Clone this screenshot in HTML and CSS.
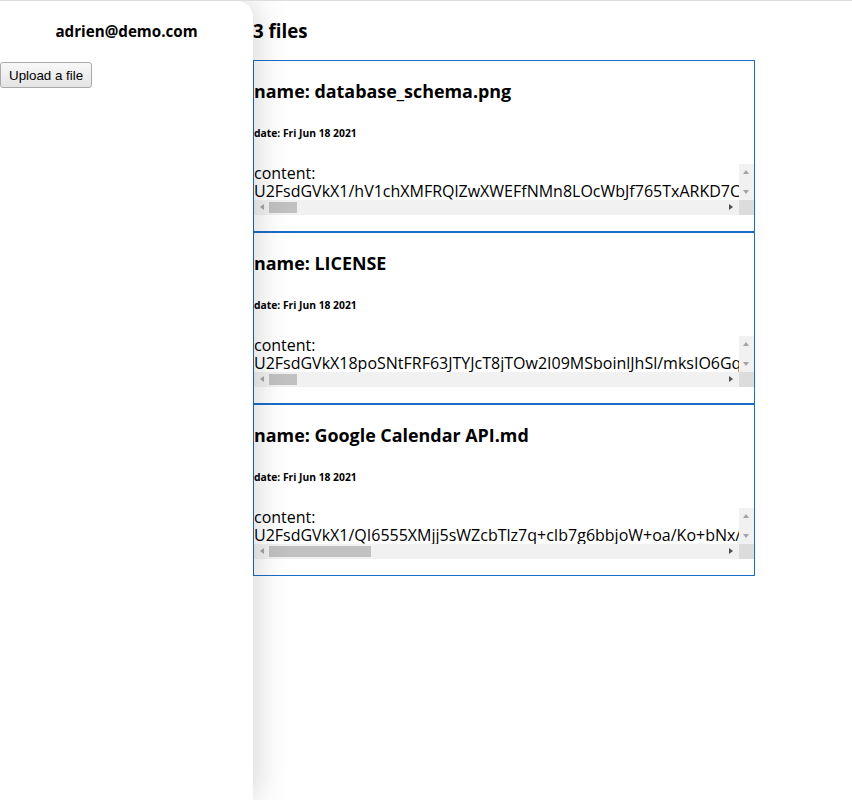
FILE: index.html
```html
<!DOCTYPE html>
<html lang="en">
<head>
<meta charset="utf-8">
<title>Files</title>
<link rel="stylesheet" href="styles.css">
</head>
<body>
<div class="app">
  <aside class="sidebar">
    <h4 class="user">adrien@demo.com</h4>
    <button class="upload" type="button">Upload a file</button>
  </aside>
  <main class="main">
    <h3 class="count">3 files</h3>
    <div class="file">
      <h3 class="name">name: database_schema.png</h3>
      <h6 class="date">date: Fri Jun 18 2021</h6>
      <div class="content">
        <p class="content-text">content: U2FsdGVkX1/hV1chXMFRQlZwXWEFfNMn8LOcWbJf765TxARKD7Cz3qLm9Vb+Hk2sPe0YtR4uWj8nGa6xIo1Dc5Fv7Nl/Ey3Zr9Kq0Ms2Bt8Ph4Jw6Ud1Xg+Ca5Vi7Oe3Ly9Tn0Rb2Qk4Sf6Mh8Wo1Az3Gp5Ix7Ej9Hc0Nu2Yd4Kv6Lb8Fm1Pt3Rs5Zw7Dq9Aj0Ik2Co4Ug6Ey8Tx1Ma3Vr5Ob7Wn9Hl0Gf2Js4Bz6Dk8Pu1Lc3Qy5Nw7Xe9Fi0Ra2St4Mv6Yo8Kh1Tb3Ed5Cj7Ul9Ag0Wp2In4Vs6Hx8Oz1Gm3Lq5Ft7Rk9Dy0Bu2Ne4Pa6Jc8Xw1Si3Kl5Mg7Ov9Th0Qf2Zb4Ar6Yn8Ej1Up3Cx5Is7Dm9Wk0Lg2Fq4Hy6Nt8Bo1Rv3Pe5Ka7Sz9Xc0Gu2Jd4Mi6Ol8Tf1Vh3Qw5En7Ab9Yr0Cs2Iz4Dx6Lk8Fp1Hm3Ng5Bj7Ru9Pt0Ka2Se4Wv6Xo8Gy1Jl3Mb5Oc7Td9Ef0Uq2Az4Yh6Ci8In1Dw3Lr5Fg7Hs9Nk0Bx2Rp4Pm6Kj8Su1Wa3Xt5Gz7Jb9Mo0Ov2Tl4Ee6Uc8Ad1Yq3Cy5Ik7Dh9Lf0Fw2Hn4Nr6Bg8Rs1Pz3Kx5Sp7Wm9Xj0Gu2Ja4Mt6Oe8Tv1Eb3Uo5Al7Yc9Cd0Iq2Dk4Ly6Fh8Hi1Nf3Bw5Rn7Pr9Kg0Ss2Wz4Xx6Gp8Jm1Mj3Ou5Ta7Ee9Uv0Ab2Yo4Cl6Ic8Dd1Lq3Fk5Hy7Nh9Bi0Rf2Pw4Kn6Sr8Wg1Xs3Gz5Jx7Mp9Om0Tj2Eu4Ua6Ae8Yv1Cb3Io5Dl7Lc9Fd0Hq2Nk4By6Rh8Pi1Kf3Sw5Wn7Xr9Gg0==</p>
        <div class="vbar"><span class="arrow up"></span><span class="arrow down"></span></div>
        <div class="hbar"><span class="arrow left"></span><span class="track"><span class="thumb thumb-small"></span></span><span class="arrow right"></span></div>
        <div class="corner"></div>
      </div>
    </div>
    <div class="file">
      <h3 class="name">name: LICENSE</h3>
      <h6 class="date">date: Fri Jun 18 2021</h6>
      <div class="content">
        <p class="content-text">content: U2FsdGVkX18poSNtFRF63JTYJcT8jTOw2I09MSboinlJhSl/mksIO6GqR3tLw8Zp0Vn+Yc5Ke2Bh7Mj4Ds9Xo1Ua6Gi3Ft8Nl0Qr5Pb2Wy7Em4Ck9Hs1Ix6Jz3Av8Ou0Tg5Rd2Sn7Lf4Mq9Be1Vp6Kw3Dh8Yt0Za5Cl2Gx7Nj4Fo9Ir1Em6Pu3Qc8Us0Hb5Wk2Xa7Ad4Sg9Oy1Tm6Rv3Lz8Jn0Bf5Ke2Mh7Pi4Dq9Cw1Fs6Gt3Hx8Nc0Iu5Ej2Vo7Yl4Zr9Qa1Up6Wb3Xd8Sm0Og5Ti2Rk7Ly4Az9Jw1Bn6Kv3Mh8Pe0Dr5Cs2Ft7Gg4Hu9Nq1Ix6Ez3Vb8Yc0Zk5Qo2Ul7Wn4Xm9Sa1Od6Tf3Rj8Lw0Ar5Js2Bx7Kp4Mi9Pg1Dc6Ct3Fh8Ge0Hy5Nl2Ik7Eb4Vd9Yu1Zq6Qs3Uw8Wz0Xo5Sn2Oe7Th4Rm9Ll1Af6Jg3Bk8Kr0My5Pt2Dv7Ci4Fa9Gp1Hb6Nd3Iw8Ej0Vx5Yz2Zf7Qh4Uq9Wl1Xc6Ss3Ok8Tu0Ro5Le2Ay7Jm4Bi9Kb1Mn6Pg3Dw8Cz0Fv5Gh2Ht7Nq4Ia9Ec1Vk6Yr3Zd8Qx0Ul5Wp2Xe7Sj4Of9Tb1Rn6Lu3Am8Jo0Bq5Ks2My7Pw4Dz9Ca1Fi6Gd3Hk8Nr0Ig5Ev2Vh7Yt4Zc9Qn1Uo6Wx3Xb8Sl0Oe5Tp2Rf7Ly4Aj9Jq1Bu6Ka3Mw8Pz0Dg5Ch2Fm7Gs4Hi9Nv1Id6Ek3Vr8Yo0Zx5Qb2Ue7Wj4Xl9Sf1Oc6Tn3Ra8Lp0Aw5Jh2Bs7Ky4Mg9Pd1Dt6Ck3Fz8Ge0Hq5Nb2Il7Eo4Vu9Yi1Zm6Qf3Ux8Wr0=</p>
        <div class="vbar"><span class="arrow up"></span><span class="arrow down"></span></div>
        <div class="hbar"><span class="arrow left"></span><span class="track"><span class="thumb thumb-small"></span></span><span class="arrow right"></span></div>
        <div class="corner"></div>
      </div>
    </div>
    <div class="file">
      <h3 class="name">name: Google Calendar API.md</h3>
      <h6 class="date">date: Fri Jun 18 2021</h6>
      <div class="content">
        <p class="content-text">content: U2FsdGVkX1/QI6555XMjj5sWZcbTlz7q+cIb7g6bbjoW+oa/Ko+bNx/lR4eTq8Vm2Zs0Pd7Yh3Kw9Gc1Fj5Nb6Lx2Uo8Ia4Sr0Bt7Mg3Hv9Cp1Oe5Wd2Xk6Qy8Ez4Jn0Rl3Ts7Af9Pu1Kb6Dm2Gh5Vi8Nc4Yw0Zq3Ix7Fs9Ok1Lj6Sg2Br5Uy8Ee=</p>
        <div class="vbar"><span class="arrow up"></span><span class="arrow down"></span></div>
        <div class="hbar"><span class="arrow left"></span><span class="track"><span class="thumb thumb-large"></span></span><span class="arrow right"></span></div>
        <div class="corner"></div>
      </div>
    </div>
  </main>
</div>
</body>
</html>
```

FILE: styles.css
```css
html, body {
  margin: 0;
  padding: 0;
}

body {
  border-top: 1px solid #dddddd;
  background: #ffffff;
  color: #000000;
  font-family: "Open Sans", "DejaVu Sans", sans-serif;
}

.app {
  display: flex;
  align-items: flex-start;
}

.sidebar {
  flex: none;
  width: 253px;
  height: 799px;
  background: #ffffff;
  border-top-right-radius: 16px;
  box-shadow: 0 0 36px rgba(0, 0, 0, 0.2);
  position: relative;
  z-index: 1;
}

.user {
  margin: 21px 0 0;
  text-align: center;
  font-size: 15.2px;
  line-height: 19px;
  font-weight: 700;
}

.upload {
  display: block;
  margin: 21px 0 0;
  height: 26px;
  padding: 0 8px;
  font-family: "Liberation Sans", Arial, sans-serif;
  font-size: 13.33px;
  color: #000000;
  background: linear-gradient(#f8f8f8, #e4e4e4);
  border: 1px solid #a9a9a9;
  border-radius: 3px;
}

.main {
  flex: none;
  width: 502px;
}

.count {
  margin: 19px 0 18px;
  font-size: 18.72px;
  line-height: 22px;
  font-weight: 700;
}

.file {
  border: 1px solid #1a6dc8;
}

.name {
  margin: 19px 0 0;
  font-size: 17.9px;
  line-height: 22px;
  font-weight: 700;
}

.date {
  margin: 25px 0 24px;
  font-size: 10.3px;
  line-height: 13px;
  font-weight: 700;
}

.content {
  display: grid;
  grid-template-columns: minmax(0, 1fr) 15px;
  grid-template-rows: auto 15px;
  margin: 0 0 16px;
}

.content-text {
  margin: 0;
  overflow: hidden;
  font-size: 16px;
  line-height: 18px;
}

.vbar {
  display: flex;
  flex-direction: column;
  justify-content: space-between;
  align-items: center;
  background: #f1f1f1;
}

.hbar {
  display: flex;
  align-items: center;
  background: #f1f1f1;
}

.corner {
  background: #dcdcdc;
}

.arrow {
  flex: none;
  width: 15px;
  height: 15px;
  position: relative;
}

.arrow::after {
  content: "";
  position: absolute;
  width: 0;
  height: 0;
}

.up::after {
  left: 4px;
  top: 6px;
  border-left: 3.5px solid transparent;
  border-right: 3.5px solid transparent;
  border-bottom: 4px solid #a3a3a3;
}

.down::after {
  left: 4px;
  top: 5px;
  border-left: 3.5px solid transparent;
  border-right: 3.5px solid transparent;
  border-top: 4px solid #a3a3a3;
}

.left::after {
  left: 6px;
  top: 4px;
  border-top: 3.5px solid transparent;
  border-bottom: 3.5px solid transparent;
  border-right: 4px solid #a3a3a3;
}

.right::after {
  left: 5px;
  top: 4px;
  border-top: 3.5px solid transparent;
  border-bottom: 3.5px solid transparent;
  border-left: 4px solid #505050;
}

.track {
  flex: 1;
  height: 15px;
  display: flex;
  align-items: center;
}

.thumb {
  display: block;
  height: 11px;
  background: #c1c1c1;
}

.thumb-small {
  width: 28px;
}

.thumb-large {
  width: 102px;
}
```
